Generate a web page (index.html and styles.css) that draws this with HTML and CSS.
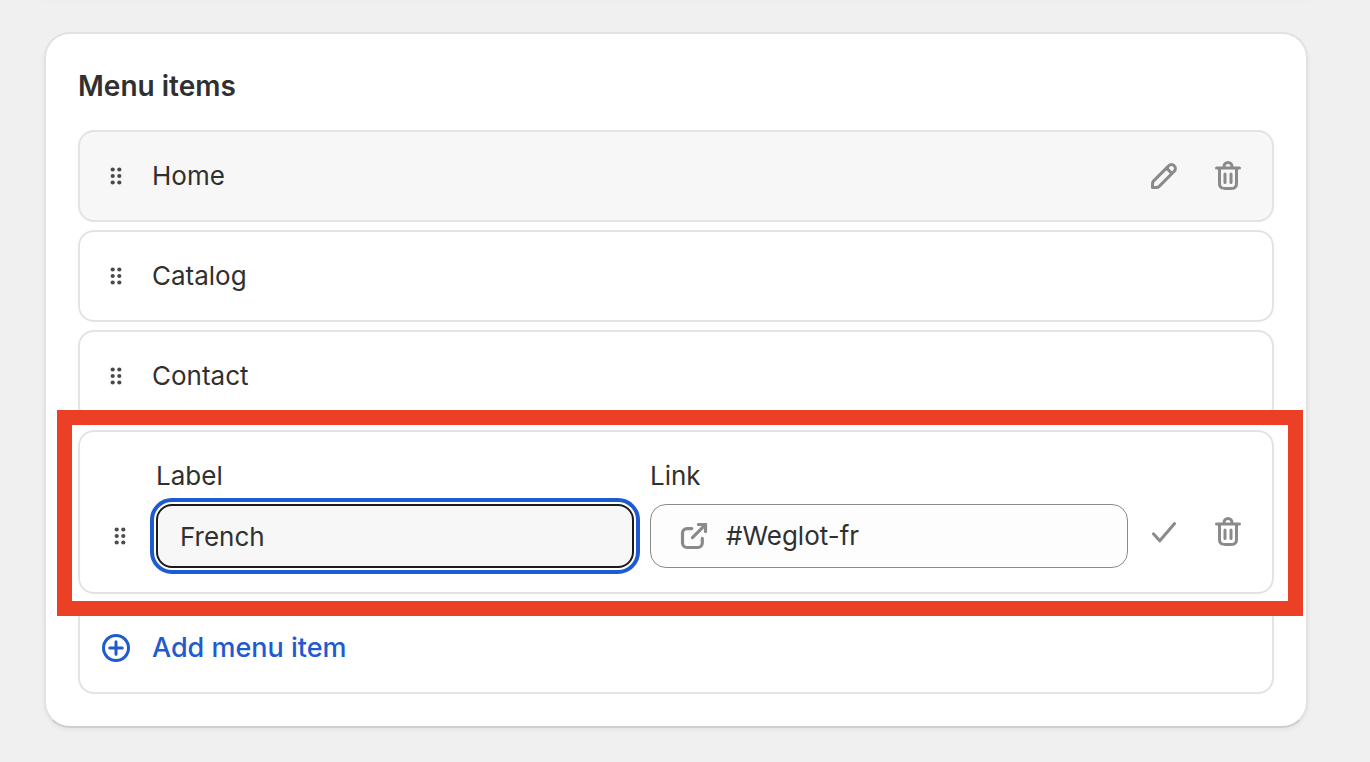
FILE: index.html
```html
<!DOCTYPE html>
<html lang="en">
<head>
<meta charset="utf-8">
<meta name="viewport" content="width=device-width, initial-scale=1">
<title>Menu items</title>
<link rel="stylesheet" href="styles.css">
</head>
<body>
<svg class="sprite" aria-hidden="true">
  <symbol id="drag" viewBox="0 0 32 32">
    <circle cx="12.7" cy="9.5" r="2.1"/><circle cx="19.3" cy="9.5" r="2.1"/>
    <circle cx="12.7" cy="16" r="2.1"/><circle cx="19.3" cy="16" r="2.1"/>
    <circle cx="12.7" cy="22.5" r="2.1"/><circle cx="19.3" cy="22.5" r="2.1"/>
  </symbol>
  <symbol id="edit" viewBox="0 0 20 20">
    <path fill-rule="evenodd" d="M15.655 4.344a2.695 2.695 0 0 0-3.81 0l-.599.599-.009-.009-1.06 1.06.008.01-5.88 5.88a2.75 2.75 0 0 0-.805 1.944v1.922a.75.75 0 0 0 .75.75h1.922a2.75 2.75 0 0 0 1.944-.806l7.54-7.539a2.695 2.695 0 0 0 0-3.81Zm-4.409 2.72-5.88 5.88a1.25 1.25 0 0 0-.366.884v1.172h1.172c.331 0 .65-.132.883-.366l5.88-5.88-1.689-1.69Zm2.75.629.599-.599a1.195 1.195 0 1 0-1.69-1.689l-.598.599 1.69 1.689Z"/>
  </symbol>
  <symbol id="trash" viewBox="0 0 20 20">
    <path d="M11.5 8.25a.75.75 0 0 1 .75.75v4.25a.75.75 0 0 1-1.5 0v-4.25a.75.75 0 0 1 .75-.75Z"/>
    <path d="M9.25 9a.75.75 0 0 0-1.5 0v4.25a.75.75 0 0 0 1.5 0v-4.25Z"/>
    <path fill-rule="evenodd" d="M7.25 5.25a2.75 2.75 0 0 1 5.5 0h3a.75.75 0 0 1 0 1.5h-.75v5.45c0 1.68 0 2.52-.327 3.162a3 3 0 0 1-1.311 1.311c-.642.327-1.482.327-3.162.327h-.4c-1.68 0-2.52 0-3.162-.327a3 3 0 0 1-1.311-1.311c-.327-.642-.327-1.482-.327-3.162v-5.45h-.75a.75.75 0 0 1 0-1.5h3Zm1.5 0a1.25 1.25 0 1 1 2.5 0h-2.5Zm-2.25 1.5h7v5.45c0 .865-.001 1.423-.036 1.848-.033.408-.09.559-.128.633a1.5 1.5 0 0 1-.655.655c-.074.038-.225.095-.633.128-.425.035-.983.036-1.848.036h-.4c-.865 0-1.423-.001-1.848-.036-.408-.033-.559-.09-.633-.128a1.5 1.5 0 0 1-.656-.655c-.037-.074-.094-.225-.127-.633-.035-.425-.036-.983-.036-1.848v-5.45Z"/>
  </symbol>
  <symbol id="check" viewBox="0 0 20 20">
    <path d="M4.7 10.9 7.9 14.4 15.3 5.8" fill="none" stroke="currentColor" stroke-width="1.5" stroke-linecap="round" stroke-linejoin="round"/>
  </symbol>
  <symbol id="external" viewBox="0 0 20 20">
    <path d="M8.9 6.3H6.5A2.25 2.25 0 0 0 4.25 8.55V13.5A2.25 2.25 0 0 0 6.5 15.75h5.4A2.25 2.25 0 0 0 14.15 13.5V11.2M9.2 10.8 15.6 4.4M12.2 4.25h3.55V7.8" fill="none" stroke="currentColor" stroke-width="1.6" stroke-linecap="round"/>
  </symbol>
  <symbol id="plus" viewBox="0 0 20 20">
    <path d="M10 6.9v6.2M6.9 10h6.2" fill="none" stroke="currentColor" stroke-width="1.5" stroke-linecap="round"/>
    <circle cx="10" cy="10" r="6.25" fill="none" stroke="currentColor" stroke-width="1.5"/>
  </symbol>
</svg>

<div class="previous-card"></div>
<main class="card">
  <h2 class="card-title">Menu items</h2>
  <ul class="menu-list">
    <li class="item item-hover">
      <button class="handle" type="button" aria-label="Move Home"><svg><use href="#drag"/></svg></button>
      <span class="item-name">Home</span>
      <div class="actions">
        <button class="icon-button" type="button" aria-label="Edit Home"><svg><use href="#edit"/></svg></button>
        <button class="icon-button" type="button" aria-label="Delete Home"><svg><use href="#trash"/></svg></button>
      </div>
    </li>
    <li class="item">
      <button class="handle" type="button" aria-label="Move Catalog"><svg><use href="#drag"/></svg></button>
      <span class="item-name">Catalog</span>
    </li>
    <li class="item">
      <button class="handle" type="button" aria-label="Move Contact"><svg><use href="#drag"/></svg></button>
      <span class="item-name">Contact</span>
    </li>
    <li class="item item-editing">
      <button class="handle" type="button" aria-label="Move French"><svg><use href="#drag"/></svg></button>
      <div class="fields">
        <div class="field">
          <label for="item-label">Label</label>
          <input class="text-box text-box-active" id="item-label" type="text" value="French">
        </div>
        <div class="field">
          <label for="item-link">Link</label>
          <div class="text-box link-box">
            <svg class="link-icon" aria-hidden="true"><use href="#external"/></svg>
            <input class="link-input" id="item-link" type="text" value="#Weglot-fr">
          </div>
        </div>
      </div>
      <div class="actions">
        <button class="icon-button" type="button" aria-label="Apply"><svg><use href="#check"/></svg></button>
        <button class="icon-button" type="button" aria-label="Delete French"><svg><use href="#trash"/></svg></button>
      </div>
      <div class="highlight"></div>
    </li>
    <li class="item">
      <button class="add-button" type="button"><svg><use href="#plus"/></svg>Add menu item</button>
    </li>
  </ul>
</main>
</body>
</html>
```
FILE: styles.css
```css
* {
  box-sizing: border-box;
}

body {
  margin: 0;
  background: #f0f0f0;
  color: #303030;
  font: 400 26px/40px Inter, "Liberation Sans", sans-serif;
}

button,
input {
  font: inherit;
  color: inherit;
}

button {
  padding: 0;
  border: 0;
  background: none;
}

svg {
  display: block;
  fill: currentColor;
}

.sprite {
  position: absolute;
  width: 0;
  height: 0;
}

.previous-card {
  margin: 0 62px 0 44px;
  border-radius: 24px;
  box-shadow: 0 0 4px 1px rgba(0, 0, 0, 0.04);
}

.card {
  margin: 32px 62px 32px 44px;
  padding: 32px;
  border: 2px solid #e2e2e2;
  border-bottom-color: #cecece;
  border-radius: 26px;
  background: #fff;
  box-shadow: 0 2px 4px rgba(0, 0, 0, 0.05);
}

.card-title {
  margin: 0 0 24px;
  font-size: 28px;
  font-weight: 600;
}

.menu-list {
  display: flex;
  flex-direction: column;
  gap: 8px;
  margin: 0;
  padding: 0;
  list-style: none;
}

.item {
  display: flex;
  align-items: center;
  gap: 20px;
  min-height: 92px;
  padding: 24px 24px 24px 20px;
  border: 2px solid #e3e3e3;
  border-radius: 16px;
}

.item-hover {
  background: #f7f7f7;
}

.item-name {
  flex: 1;
}

.handle {
  color: #4a4a4a;
}

.handle svg {
  width: 32px;
  height: 32px;
}

.actions {
  display: flex;
  gap: 24px;
}

.icon-button {
  color: #8a8a8a;
}

.icon-button svg {
  width: 40px;
  height: 40px;
}

.item-editing {
  position: relative;
  align-items: flex-end;
  padding-left: 24px;
}

.item-editing .handle,
.item-editing .actions {
  margin-bottom: 16px;
}

.item-editing .actions {
  margin-left: -4px;
}

.fields {
  display: grid;
  flex: 1;
  grid-template-columns: repeat(2, minmax(0, 1fr));
  gap: 16px;
}

.field {
  display: flex;
  flex-direction: column;
  gap: 8px;
}

.text-box {
  width: 100%;
  height: 64px;
  padding: 0 22px;
  border: 1px solid #8a8a8a;
  border-radius: 16px;
  background: #fdfdfd;
}

.text-box-active {
  border: 2px solid #1a1a1a;
  background: #f7f7f7;
  outline: 4px solid #1f5bd0;
  outline-offset: 2px;
}

.link-box {
  display: flex;
  align-items: center;
  gap: 12px;
  padding: 0 23px;
}

.link-icon {
  flex: none;
  width: 40px;
  height: 40px;
  color: #8a8a8a;
}

.link-input {
  flex: 1;
  min-width: 0;
  padding: 0;
  border: 0;
  background: none;
  outline: 0;
}

/* Callout frame drawn over the neighbouring rows */
.highlight {
  position: absolute;
  inset: -22px -31px -24px -23px;
  border: 15px solid #eb4026;
  pointer-events: none;
}

.add-button {
  display: flex;
  align-items: center;
  gap: 16px;
  margin-left: -4px;
  color: #1f5bd0;
  font-size: 27px;
  font-weight: 500;
}

.add-button svg {
  width: 40px;
  height: 40px;
}
```
